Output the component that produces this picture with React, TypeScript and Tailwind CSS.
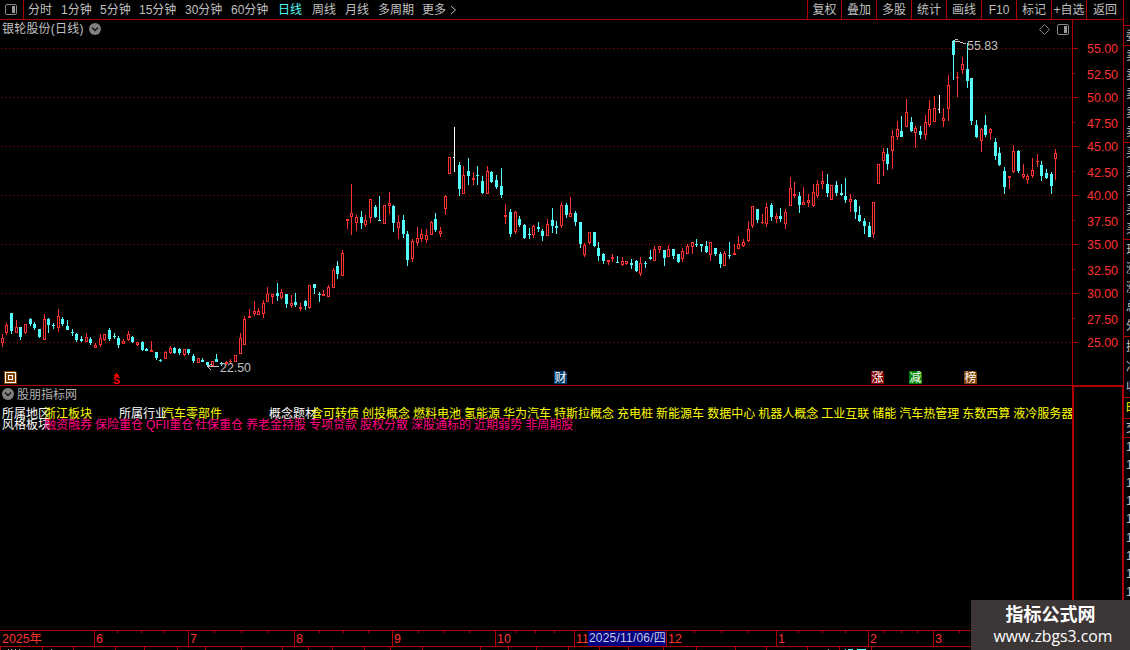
import type { ReactNode } from 'react'

type Kind = 'r' | 'c' | 'w'
// x, high, body top, body bottom, low, kind
type Candle = [number, number, number, number, number, Kind]

const candles: Candle[] = [
  [2, 334, 338, 343, 347, 'r'], [6, 323, 325, 333, 335, 'r'], [11, 313, 313, 331, 334, 'c'], [16, 320, 327, 333, 333, 'r'],
  [20, 327, 327, 337, 340, 'c'], [25, 324, 324, 333, 334, 'r'], [30, 318, 319, 324, 326, 'c'], [34, 322, 324, 328, 330, 'c'],
  [39, 329, 329, 337, 338, 'c'], [44, 314, 319, 340, 340, 'r'], [48, 318, 319, 325, 333, 'c'], [53, 323, 325, 326, 329, 'c'],
  [58, 309, 316, 328, 332, 'r'], [62, 317, 319, 324, 326, 'c'], [67, 320, 326, 330, 330, 'c'], [72, 329, 332, 333, 336, 'c'],
  [76, 333, 334, 340, 342, 'c'], [81, 336, 339, 341, 342, 'c'], [86, 333, 337, 342, 342, 'r'], [90, 337, 339, 343, 345, 'c'],
  [95, 343, 345, 348, 348, 'r'], [100, 334, 338, 345, 347, 'r'], [104, 334, 334, 340, 341, 'r'], [109, 328, 330, 339, 341, 'c'],
  [114, 333, 336, 337, 339, 'c'], [118, 336, 338, 345, 348, 'c'], [123, 339, 341, 344, 344, 'r'], [128, 331, 334, 340, 341, 'r'],
  [132, 336, 337, 342, 343, 'c'], [137, 342, 342, 345, 346, 'r'], [142, 341, 342, 350, 351, 'c'], [146, 348, 349, 351, 351, 'c'],
  [151, 341, 350, 352, 352, 'r'], [156, 352, 352, 358, 360, 'c'], [160, 359, 360, 361, 362, 'c'], [165, 351, 352, 359, 359, 'r'],
  [170, 346, 348, 353, 354, 'r'], [174, 347, 348, 353, 354, 'c'], [179, 348, 349, 353, 355, 'c'], [184, 349, 349, 355, 356, 'r'],
  [188, 349, 349, 353, 355, 'c'], [193, 354, 356, 361, 363, 'c'], [198, 358, 358, 363, 363, 'r'], [202, 358, 360, 362, 362, 'c'],
  [207, 362, 362, 365, 367, 'c'], [212, 361, 361, 366, 366, 'r'], [216, 354, 359, 362, 362, 'c'], [221, 362, 363, 364, 366, 'c'],
  [226, 361, 362, 364, 365, 'r'], [230, 359, 361, 362, 364, 'r'], [235, 355, 355, 362, 362, 'r'], [240, 333, 338, 354, 354, 'r'],
  [244, 316, 319, 345, 345, 'r'], [249, 309, 316, 318, 318, 'r'], [254, 301, 311, 314, 316, 'r'], [258, 308, 311, 315, 315, 'r'],
  [263, 300, 303, 314, 318, 'r'], [267, 287, 294, 302, 302, 'r'], [272, 294, 294, 297, 304, 'r'], [277, 283, 293, 296, 301, 'c'],
  [281, 289, 292, 298, 299, 'r'], [286, 294, 294, 304, 308, 'c'], [291, 295, 303, 306, 308, 'r'], [295, 293, 302, 305, 307, 'c'],
  [300, 303, 307, 309, 311, 'r'], [305, 300, 301, 306, 310, 'c'], [309, 285, 285, 308, 309, 'r'], [314, 284, 284, 288, 294, 'c'],
  [319, 292, 294, 295, 302, 'c'], [323, 290, 294, 296, 296, 'r'], [328, 285, 287, 297, 297, 'r'], [333, 268, 270, 288, 288, 'r'],
  [337, 261, 266, 274, 279, 'c'], [342, 250, 253, 276, 276, 'r'], [347, 219, 219, 221, 229, 'r'], [351, 184, 213, 217, 235, 'r'],
  [356, 215, 217, 223, 231, 'r'], [361, 211, 217, 223, 229, 'c'], [365, 215, 220, 225, 227, 'r'], [370, 199, 199, 218, 223, 'r'],
  [375, 205, 207, 217, 218, 'c'], [379, 196, 220, 221, 221, 'c'], [384, 205, 205, 224, 224, 'r'], [389, 192, 203, 206, 214, 'r'],
  [393, 205, 206, 223, 232, 'c'], [398, 215, 222, 228, 239, 'r'], [403, 215, 220, 234, 238, 'c'], [407, 231, 234, 260, 266, 'c'],
  [412, 239, 241, 259, 262, 'r'], [417, 227, 238, 243, 246, 'r'], [421, 229, 234, 239, 242, 'r'], [426, 229, 235, 240, 243, 'r'],
  [431, 221, 222, 235, 235, 'r'], [435, 213, 219, 230, 232, 'c'], [440, 227, 231, 234, 237, 'r'], [445, 195, 196, 209, 215, 'r'],
  [449, 157, 157, 174, 174, 'r'], [454, 127, 157, 158, 172, 'w'], [459, 162, 165, 189, 196, 'c'], [463, 166, 175, 194, 194, 'r'],
  [468, 158, 171, 176, 185, 'c'], [473, 172, 178, 180, 185, 'r'], [477, 166, 175, 176, 185, 'c'], [482, 176, 181, 193, 194, 'c'],
  [487, 166, 171, 194, 194, 'r'], [491, 171, 172, 182, 183, 'c'], [496, 175, 180, 187, 189, 'c'], [501, 168, 186, 195, 198, 'c'],
  [505, 204, 215, 217, 224, 'r'], [510, 209, 212, 234, 237, 'c'], [515, 211, 212, 232, 234, 'r'], [519, 216, 219, 225, 227, 'c'],
  [524, 224, 225, 238, 239, 'c'], [529, 228, 234, 235, 239, 'c'], [533, 225, 226, 235, 238, 'r'], [538, 222, 227, 229, 232, 'c'],
  [542, 229, 231, 236, 241, 'c'], [547, 219, 224, 236, 236, 'r'], [552, 208, 220, 226, 233, 'c'], [556, 221, 226, 228, 234, 'c'],
  [561, 202, 205, 226, 228, 'r'], [566, 203, 205, 215, 218, 'c'], [570, 197, 213, 217, 217, 'r'], [575, 211, 213, 222, 226, 'c'],
  [580, 222, 222, 244, 248, 'c'], [584, 243, 245, 255, 257, 'r'], [589, 232, 232, 243, 244, 'r'], [594, 232, 232, 246, 247, 'c'],
  [598, 242, 248, 256, 261, 'c'], [603, 253, 254, 261, 264, 'c'], [608, 260, 260, 262, 265, 'r'], [612, 254, 257, 259, 262, 'r'],
  [617, 256, 262, 263, 263, 'c'], [622, 257, 261, 265, 266, 'r'], [626, 261, 261, 264, 265, 'r'], [631, 259, 263, 265, 269, 'c'],
  [636, 260, 261, 271, 272, 'c'], [640, 257, 263, 274, 276, 'r'], [645, 261, 263, 264, 268, 'c'], [650, 250, 257, 259, 260, 'c'],
  [654, 246, 249, 261, 261, 'r'], [659, 246, 246, 250, 253, 'r'], [664, 250, 250, 258, 266, 'c'], [668, 245, 249, 257, 257, 'r'],
  [673, 249, 249, 256, 259, 'c'], [678, 254, 254, 262, 263, 'c'], [682, 248, 251, 259, 262, 'r'], [687, 244, 246, 254, 254, 'r'],
  [692, 242, 242, 247, 254, 'r'], [696, 239, 244, 245, 247, 'c'], [701, 244, 244, 246, 252, 'c'], [706, 241, 246, 252, 253, 'c'],
  [710, 242, 242, 255, 261, 'r'], [715, 248, 248, 254, 256, 'c'], [720, 252, 254, 264, 268, 'c'], [724, 251, 253, 266, 266, 'r'],
  [729, 242, 255, 256, 259, 'c'], [734, 244, 253, 255, 255, 'r'], [738, 236, 244, 249, 249, 'r'], [743, 239, 242, 246, 247, 'r'],
  [748, 221, 229, 241, 242, 'r'], [752, 206, 206, 226, 228, 'r'], [757, 209, 209, 220, 223, 'c'], [762, 214, 222, 223, 224, 'r'],
  [766, 203, 207, 224, 227, 'r'], [771, 203, 205, 217, 221, 'c'], [776, 213, 216, 219, 223, 'r'], [780, 208, 216, 219, 222, 'c'],
  [785, 209, 212, 224, 229, 'r'], [790, 177, 188, 206, 206, 'r'], [794, 182, 194, 196, 198, 'r'], [799, 192, 196, 205, 213, 'c'],
  [803, 187, 202, 205, 205, 'r'], [808, 194, 200, 203, 207, 'r'], [813, 184, 192, 206, 207, 'r'], [817, 180, 184, 196, 198, 'r'],
  [822, 171, 181, 184, 189, 'r'], [827, 174, 184, 193, 197, 'c'], [831, 185, 185, 200, 200, 'r'], [836, 181, 185, 193, 196, 'c'],
  [841, 184, 193, 195, 196, 'c'], [845, 178, 196, 200, 203, 'c'], [850, 194, 199, 202, 212, 'r'], [855, 199, 200, 212, 219, 'c'],
  [859, 206, 215, 221, 222, 'c'], [864, 218, 221, 226, 234, 'c'], [869, 222, 226, 237, 237, 'c'], [873, 202, 202, 234, 238, 'r'],
  [878, 164, 164, 184, 184, 'r'], [883, 148, 152, 161, 176, 'r'], [887, 148, 154, 164, 170, 'c'], [892, 130, 136, 151, 169, 'r'],
  [897, 121, 129, 137, 140, 'r'], [901, 116, 131, 137, 137, 'c'], [906, 99, 112, 127, 127, 'r'], [911, 117, 122, 131, 132, 'c'],
  [915, 126, 128, 133, 148, 'r'], [920, 126, 131, 135, 139, 'c'], [925, 115, 122, 135, 140, 'r'], [929, 100, 109, 125, 127, 'r'],
  [934, 96, 108, 122, 122, 'r'], [939, 95, 109, 110, 113, 'w'], [943, 108, 118, 121, 127, 'r'], [948, 75, 85, 109, 121, 'r'],
  [953, 40, 41, 55, 80, 'c'], [957, 72, 77, 78, 97, 'r'], [962, 57, 64, 70, 74, 'r'], [967, 43, 69, 81, 88, 'c'],
  [971, 78, 78, 121, 125, 'c'], [976, 120, 125, 137, 138, 'c'], [981, 128, 129, 141, 152, 'r'], [985, 115, 125, 135, 137, 'c'],
  [990, 128, 129, 133, 140, 'r'], [995, 138, 142, 156, 160, 'c'], [999, 147, 153, 165, 166, 'c'], [1004, 167, 171, 187, 194, 'c'],
  [1009, 176, 176, 178, 189, 'r'], [1013, 145, 151, 172, 173, 'r'], [1018, 150, 151, 171, 173, 'c'], [1023, 164, 174, 177, 179, 'r'],
  [1027, 174, 176, 180, 184, 'r'], [1032, 158, 170, 176, 178, 'r'], [1037, 154, 161, 162, 167, 'r'], [1041, 161, 165, 176, 181, 'c'],
  [1046, 169, 173, 178, 179, 'c'], [1051, 172, 174, 186, 194, 'c'], [1055, 149, 153, 159, 180, 'r'],
]

const colors: Record<Kind, string> = { r: '#ff3232', c: '#54fcfc', w: '#ffffff' }
const gridLines = [48, 97, 146, 195, 244, 293, 342]
const midTicks = [73, 122, 171, 220, 269, 318]
const prices = ['55.00', '52.50', '50.00', '47.50', '45.00', '42.50', '40.00', '37.50', '35.00', '32.50', '30.00', '27.50', '25.00']

const periods = [
  { label: '分时', w: 'w-[33px]' },
  { label: '1分钟', w: 'w-[39px]' },
  { label: '5分钟', w: 'w-[39px]' },
  { label: '15分钟', w: 'w-[46px]' },
  { label: '30分钟', w: 'w-[46px]' },
  { label: '60分钟', w: 'w-[47px]' },
  { label: '日线', w: 'w-[34px]' },
  { label: '周线', w: 'w-[33px]' },
  { label: '月线', w: 'w-[33px]' },
  { label: '多周期', w: 'w-[44px]' },
  { label: '更多', w: 'w-[28px]' },
]
const tools = ['复权', '叠加', '多股', '统计', '画线', 'F10', '标记', '+自选', '返回']

const concepts = ['含可转债', '创投概念', '燃料电池', '氢能源', '华为汽车', '特斯拉概念', '充电桩', '新能源车', '数据中心', '机器人概念', '工业互联', '储能', '汽车热管理', '东数西算', '液冷服务器']
const styles = ['融资融券', '保险重仓', 'QFII重仓', '社保重仓', '养老金持股', '专项贷款', '股权分散', '深股通标的', '近期弱势', '非周期股']

const months = [
  { label: '2025年', w: 'w-[94px]' },
  { label: '6', w: 'w-[94px]' },
  { label: '7', w: 'w-[106px]' },
  { label: '8', w: 'w-[98px]' },
  { label: '9', w: 'w-[103px]' },
  { label: '10', w: 'w-[79px]' },
  { label: '11', w: 'w-[92px]' },
  { label: '12', w: 'w-[110px]' },
  { label: '1', w: 'w-[92px]' },
  { label: '2', w: 'w-[65px]' },
  { label: '3', w: 'w-[189px]' },
]
const minorTicks = [117, 141, 164, 214, 241, 268, 319, 343, 368, 418, 444, 469, 515, 535, 554, 694, 721, 748, 798, 822, 845, 883, 901, 917, 959]
const tabTicks = [0, 42, 73, 115, 144, 177, 205, 241, 282, 308, 332, 364, 390, 422, 480, 508, 536, 568, 599, 628, 663, 696, 735, 766, 807, 839, 871]

function CandleShape({ c }: { c: Candle }) {
  const [x, high, top, bottom, low, kind] = c
  const color = colors[kind]
  return (
    <g fill={color}>
      <rect x={x} y={high} width={1} height={low - high} />
      {kind === 'w' ? (
        <rect x={x - 1} y={top} width={2} height={1} />
      ) : (
        <rect x={x - 1} y={top} width={3} height={bottom - top} />
      )}
      {kind === 'r' && bottom - top > 2 && <rect x={x} y={top + 1} width={1} height={bottom - top - 2} fill="#000" />}
    </g>
  )
}

function ChevronBadge() {
  return (
    <svg width="12" height="12" viewBox="0 0 12 12" className="shrink-0">
      <circle cx="6" cy="6" r="6" fill="#808080" />
      <path d="M3 4.5 L6 7.5 L9 4.5" fill="none" stroke="#111" strokeWidth="1.4" />
    </svg>
  )
}

function PanelIcon() {
  return (
    <svg width="12" height="11" viewBox="0 0 12 11" className="shrink-0">
      <rect x="0.5" y="0.5" width="11" height="10" rx="1.5" fill="none" stroke="#888" />
      <rect x="7" y="2" width="3" height="7" fill="#999" />
    </svg>
  )
}

function Pin({ className, children }: { className: string; children: ReactNode }) {
  return (
    <span className={`absolute top-[351px] flex h-[13px] w-[13px] items-center justify-center rounded-tr-[3px] text-[12px] leading-none text-white ${className}`}>
      {children}
    </span>
  )
}

function Toolbar() {
  return (
    <div className="flex h-5 items-stretch justify-between border-b border-[#b00000] text-[#c0c0c0]">
      <div className="flex items-center">
        <div className="mr-1 flex h-full w-6 items-center border-r border-[#b00000] pl-[5px]">
          <PanelIcon />
        </div>
        {periods.map((p) => (
          <span key={p.label} className={`${p.w} whitespace-nowrap ${p.label === '日线' ? 'text-[#54fcfc]' : ''}`}>
            {p.label}
          </span>
        ))}
        <svg width="7" height="10" viewBox="0 0 7 10">
          <path d="M1 1 L5.5 5 L1 9" fill="none" stroke="#c0c0c0" />
        </svg>
      </div>
      <div className="flex">
        {tools.map((t) => (
          <span key={t} className="flex w-[35px] items-center justify-center whitespace-nowrap border-l border-[#b00000] first:w-[34px] last:w-[37px]">
            {t}
          </span>
        ))}
      </div>
    </div>
  )
}

function KLineChart() {
  return (
    <div className="relative h-[365px] w-[1072px] shrink-0">
      <svg width="1072" height="365" viewBox="0 20 1072 365" className="absolute inset-0" shapeRendering="crispEdges">
        {gridLines.map((y) => (
          <line key={y} x1="1" x2="1072" y1={y + 0.5} y2={y + 0.5} stroke="#b00000" strokeDasharray="1 3" />
        ))}
        {candles.map((c) => (
          <CandleShape key={c[0]} c={c} />
        ))}
        <path d="M953.5 44 V41.5 M954 40.5 H955 M955 39.5 H958 M955 41.5 H957 M957 41.5 H960 M960 42.5 H963 M963 43.5 H966" fill="none" stroke="#c0c0c0" />
        <path d="M207 366.5 H219 M208 365.5 H210 M208 367.5 H209 M209 368.5 H210 M210 369.5 H211 M210 364.5 H212" fill="none" stroke="#c0c0c0" />
        <text x="967" y="50" fill="#c0c0c0" fontSize="12.4">55.83</text>
        <text x="220" y="372" fill="#c0c0c0" fontSize="12.4">22.50</text>
      </svg>
      <div className="relative flex items-center justify-between pl-[2px] pr-[3px]">
        <div className="flex items-center gap-[5px] text-[#c0c0c0]">
          <span className="tracking-[0.2px]">银轮股份(日线)</span>
          <ChevronBadge />
        </div>
        <div className="flex items-center gap-[7px]">
          <svg width="11" height="11" viewBox="0 0 11 11">
            <path d="M5.5 0.5 L10.5 5.5 L5.5 10.5 L0.5 5.5 Z" fill="none" stroke="#808080" />
          </svg>
          <PanelIcon />
        </div>
      </div>
      <Pin className="left-[4px] bg-[#804000]">
        <svg width="11" height="11" viewBox="0 0 11 11" fill="none" stroke="#fff" shapeRendering="crispEdges">
          <rect x="0.5" y="0.5" width="10" height="10" />
          <rect x="3.5" y="3.5" width="4" height="4" />
        </svg>
      </Pin>
      <div className="absolute left-[113px] top-[353px] flex w-[7px] flex-col items-center text-[10.5px] font-bold leading-[9px] text-[#ff0000]">
        <svg width="5" height="3" viewBox="0 0 5 3" fill="#ff0000" shapeRendering="crispEdges">
          <rect x="2" y="0" width="1" height="1" />
          <rect x="1" y="1" width="3" height="1" />
          <rect x="0" y="2" width="5" height="1" />
        </svg>
        <span>S</span>
      </div>
      <Pin className="left-[554px] bg-[#003c70]">财</Pin>
      <Pin className="left-[871px] bg-[#800000]">涨</Pin>
      <Pin className="left-[909px] bg-[#008000]">减</Pin>
      <Pin className="left-[964px] bg-[#804000]">榜</Pin>
    </div>
  )
}

function PriceAxis() {
  return (
    <div className="relative w-[51px] border-l border-[#b00000] text-[12.4px] text-[#ff3232]">
      <svg width="6" height="365" viewBox="0 20 6 365" className="absolute left-0 top-0" fill="#b00000" shapeRendering="crispEdges">
        {gridLines.map((y) => <rect key={y} x="0" y={y} width="5" height="1" />)}
        {midTicks.map((y) => <rect key={y} x="0" y={y} width="2" height="1" />)}
      </svg>
      <div className="flex flex-col pl-[14px] pt-[23px]">
        {prices.map((p) => (
          <span key={p} className="mb-[11px] h-3 leading-3 odd:mb-[14px]">{p}</span>
        ))}
      </div>
    </div>
  )
}

function IndicatorPanel() {
  return (
    <div className="flex h-[245px]">
      <div className="w-[1072px] shrink-0 overflow-hidden border-t border-[#b00000] text-[12px] leading-3">
        <div className="flex h-[22px] items-start gap-[3px] pl-[2px] pt-[2px] text-[#b0b0b0]">
          <ChevronBadge />
          <span className="pt-px">股朋指标网</span>
        </div>
        <div className="flex h-[11px] whitespace-nowrap pl-[2px] text-[#ffff00]">
          <span className="w-[42px] shrink-0 text-white">所属地区</span>
          <span className="w-[75px] shrink-0">浙江板块</span>
          <span className="w-[43px] shrink-0 text-white">所属行业</span>
          <span className="w-[107px] shrink-0">汽车零部件</span>
          <span className="w-[42px] shrink-0 text-white">概念题材</span>
          <div className="flex shrink-0 gap-[3px]">
            {concepts.map((c) => <span key={c}>{c}</span>)}
          </div>
        </div>
        <div className="flex whitespace-nowrap pl-[2px] text-[#ff0080]">
          <span className="w-[42px] shrink-0 text-white">风格板块</span>
          <div className="flex gap-[3px]">
            {styles.map((s) => <span key={s} className={s === 'QFII重仓' ? 'w-[46px]' : ''}>{s}</span>)}
          </div>
        </div>
      </div>
      <div className="w-[52px] shrink-0 border-2 border-b-0 border-[#b00000]" />
    </div>
  )
}

function TimeAxis() {
  return (
    <div className="relative h-[17px] shrink-0 border-y border-[#b00000] text-[12.4px] leading-[17px] text-[#ff3232]">
      <svg width="1123" height="2" viewBox="0 0 1123 2" className="absolute left-0 top-0" fill="#b00000">
        {minorTicks.map((x) => <rect key={x} x={x} y="0" width="1" height="2" />)}
      </svg>
      <div className="flex">
        {months.map((m) => (
          <span key={m.label} className={`${m.w} h-[15px] shrink-0 border-l border-[#b00000] pl-px first:border-0 first:pl-[2px]`}>
            {m.label}
          </span>
        ))}
      </div>
      <span className="absolute left-[588px] top-0 h-[15px] w-[78px] whitespace-nowrap bg-[#000080] pl-px text-[12px] leading-[15px] tracking-[0.2px] text-[#c8c8e0]">
        2025/11/06/四
      </span>
    </div>
  )
}

// only the upper edge of the tab bar fits on screen
function TabBarEdge() {
  return (
    <svg width="1123" height="3" viewBox="0 0 1123 3" shapeRendering="crispEdges">
      <g fill="#b00000">
        {tabTicks.map((x) => <rect key={x} x={x} y="0" width="1" height="3" />)}
      </g>
      <path d="M8 2.5 H9 M11 2.5 H12 M15 2.5 H16 M19 2.5 H20 M51 2.5 H52 M828 2.5 H829" stroke="#c0c0c0" />
      <path d="M845 2.5 H846 M848 2.5 H853 M857 2.5 H866" stroke="#54fcfc" />
    </svg>
  )
}

const sideGroups = [
  { rows: ['委'], h: 'h-5' },
  { rows: ['卖', '卖', '卖', '卖', '卖'], h: 'h-[97px]' },
  { rows: ['买', '买', '买', '买', '买'], h: 'h-[97px]' },
  { rows: ['现', '涨', '涨', '总', '外'], h: 'h-[97px]' },
  { rows: ['换', '净', '收'], h: 'h-[61px]' },
  { rows: ['时'], h: 'h-[21px] text-[#ffff00]' },
  { rows: ['交'], h: 'h-[19px]' },
  { rows: ['1', '1', '1', '1', '1', '1', '1', '1', '1'], h: 'h-[164px]' },
]

function QuoteStrip() {
  return (
    <div className="flex w-[6px] shrink-0 flex-col overflow-hidden pt-[25px] leading-3 text-[#c0c0c0]">
      {sideGroups.map((g, i) => (
        <div key={i} className={`flex shrink-0 flex-col justify-around border-t border-[#b00000] pl-[2px] ${g.h}`}>
          {g.rows.map((r, j) => <span key={j}>{r}</span>)}
        </div>
      ))}
    </div>
  )
}

export default function App() {
  return (
    <div className="relative flex h-[650px] w-[1130px] overflow-hidden bg-black font-['Liberation_Sans','Noto_Sans_CJK_SC',sans-serif] text-[12px] leading-[18px]">
      <div className="flex w-[1124px] shrink-0 flex-col border-r border-[#b00000]">
        <Toolbar />
        <div className="flex h-[365px]">
          <KLineChart />
          <PriceAxis />
        </div>
        <IndicatorPanel />
        <TimeAxis />
        <TabBarEdge />
      </div>
      <QuoteStrip />
      <div className="absolute bottom-0 right-0 flex h-[50px] w-[159px] flex-col items-center bg-[#3c3636] pt-[5px] text-white">
        <span className="text-[18px] font-bold leading-[21px]">指标公式网</span>
        <span className="pl-[5px] font-['Open_Sans',sans-serif] text-[15.8px] leading-[20px]">www.zbgs3.com</span>
      </div>
    </div>
  )
}
